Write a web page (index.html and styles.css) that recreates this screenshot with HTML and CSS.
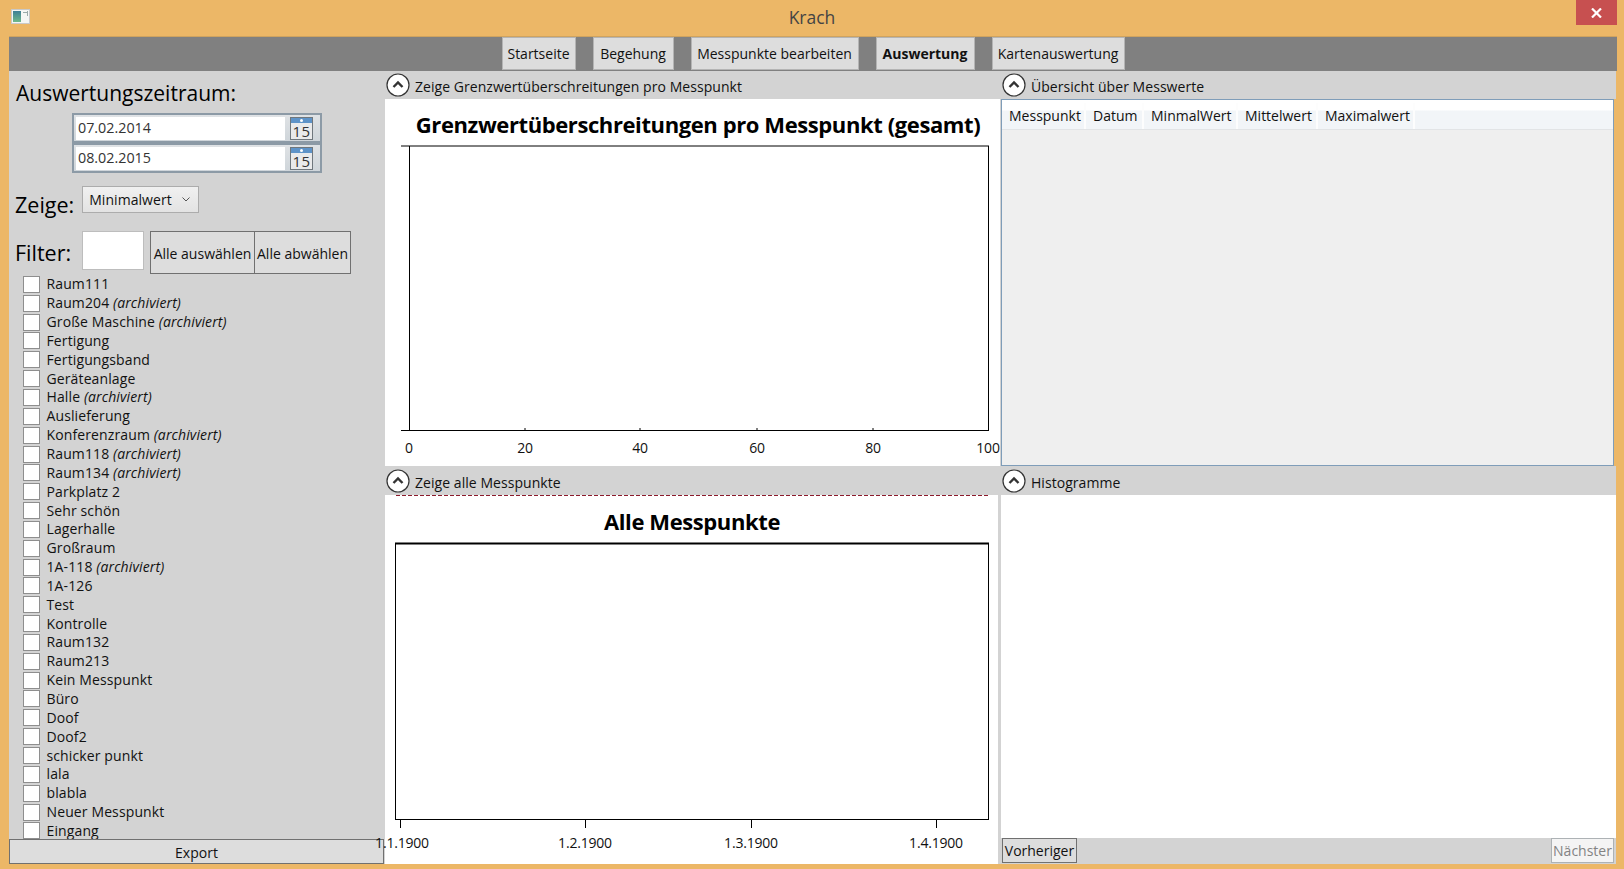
FILE: index.html
```html
<!DOCTYPE html>
<html lang="de">
<head>
<meta charset="utf-8">
<title>Krach</title>
<link rel="stylesheet" href="styles.css">
</head>
<body>
<div class="window">
  <header class="titlebar">
    <svg class="app-icon" width="20" height="16" viewBox="0 0 20 16"><rect x="0.5" y="0.5" width="18" height="14" fill="#f4f6f4" stroke="#c9c9c9"/><defs><linearGradient id="g" x1="0" y1="0" x2="0" y2="1"><stop offset="0" stop-color="#3d7f96"/><stop offset="1" stop-color="#6fb98a"/></linearGradient></defs><rect x="2" y="2" width="8" height="11" fill="url(#g)"/><rect x="12" y="3" width="4" height="1" fill="#9aa"/><rect x="16" y="2" width="1" height="5" fill="#9aa"/></svg>
    <span class="title">Krach</span>
    <button class="close" aria-label="Schließen"><svg width="11" height="10" viewBox="0 0 11 10"><path d="M1 0.5 L10 9.5 M10 0.5 L1 9.5" stroke="#fff" stroke-width="2.2" fill="none"/></svg></button>
  </header>
  <div class="content">
    <nav class="nav">
      <button class="tab tab-1">Startseite</button>
      <button class="tab tab-2">Begehung</button>
      <button class="tab tab-3">Messpunkte bearbeiten</button>
      <button class="tab tab-4">Auswertung</button>
      <button class="tab tab-5">Kartenauswertung</button>
    </nav>
    <div class="main">
      <aside class="sidebar">
        <div class="heading">Auswertungszeitraum:</div>
        <div class="pickers">
          <div class="picker"><span class="date">07.02.2014</span><svg class="cal" width="23" height="23" viewBox="0 0 23 23"><rect x="0.5" y="0.5" width="22" height="22" fill="#e9eaeb" stroke="#6f777d"/><rect x="1" y="1" width="21" height="5" fill="#5e93c8"/><circle cx="11.5" cy="3.5" r="1.5" fill="#fff"/><text class="cal-num" x="11.5" y="19.5">15</text></svg></div>
          <div class="picker"><span class="date">08.02.2015</span><svg class="cal" width="23" height="23" viewBox="0 0 23 23"><rect x="0.5" y="0.5" width="22" height="22" fill="#e9eaeb" stroke="#6f777d"/><rect x="1" y="1" width="21" height="5" fill="#5e93c8"/><circle cx="11.5" cy="3.5" r="1.5" fill="#fff"/><text class="cal-num" x="11.5" y="19.5">15</text></svg></div>
        </div>
        <div class="zeige-row">
          <span class="big-label">Zeige:</span>
          <div class="combo"><span>Minimalwert</span><svg width="8" height="5" viewBox="0 0 8 5"><path d="M0.5 0.5 L4 4 L7.5 0.5" fill="none" stroke="#555" stroke-width="1"/></svg></div>
        </div>
        <div class="filter-row">
          <span class="big-label filter-label">Filter:</span>
          <div class="filter-input"></div>
          <button class="sel-btn sel-a">Alle auswählen</button>
          <button class="sel-btn sel-b">Alle abwählen</button>
        </div>
        <ul class="list">
          <li><i class="box"></i>Raum111</li>
          <li><i class="box"></i>Raum204&nbsp;<em>(archiviert)</em></li>
          <li><i class="box"></i>Große Maschine&nbsp;<em>(archiviert)</em></li>
          <li><i class="box"></i>Fertigung</li>
          <li><i class="box"></i>Fertigungsband</li>
          <li><i class="box"></i>Geräteanlage</li>
          <li><i class="box"></i>Halle&nbsp;<em>(archiviert)</em></li>
          <li><i class="box"></i>Auslieferung</li>
          <li><i class="box"></i>Konferenzraum&nbsp;<em>(archiviert)</em></li>
          <li><i class="box"></i>Raum118&nbsp;<em>(archiviert)</em></li>
          <li><i class="box"></i>Raum134&nbsp;<em>(archiviert)</em></li>
          <li><i class="box"></i>Parkplatz 2</li>
          <li><i class="box"></i>Sehr schön</li>
          <li><i class="box"></i>Lagerhalle</li>
          <li><i class="box"></i>Großraum</li>
          <li><i class="box"></i>1A-118&nbsp;<em>(archiviert)</em></li>
          <li><i class="box"></i>1A-126</li>
          <li><i class="box"></i>Test</li>
          <li><i class="box"></i>Kontrolle</li>
          <li><i class="box"></i>Raum132</li>
          <li><i class="box"></i>Raum213</li>
          <li><i class="box"></i>Kein Messpunkt</li>
          <li><i class="box"></i>Büro</li>
          <li><i class="box"></i>Doof</li>
          <li><i class="box"></i>Doof2</li>
          <li><i class="box"></i>schicker punkt</li>
          <li><i class="box"></i>lala</li>
          <li><i class="box"></i>blabla</li>
          <li><i class="box"></i>Neuer Messpunkt</li>
          <li><i class="box"></i>Eingang</li>
        </ul>
        <button class="export">Export</button>
      </aside>
      <div class="panes">
        <section class="pane pane-a">
          <div class="pane-head"><svg class="toggle" width="24" height="24" viewBox="0 0 24 24"><circle cx="12" cy="12" r="11" fill="#fff" stroke="#333" stroke-width="1.2"/><path d="M7.5 14 L12 9.5 L16.5 14" fill="none" stroke="#333" stroke-width="2.4"/></svg><span>Zeige Grenzwertüberschreitungen pro Messpunkt</span></div>
          <div class="pane-body">
            <svg class="chart" width="615" height="367" viewBox="385 99 615 367">
              <text class="chart-title" x="698" y="133">Grenzwertüberschreitungen pro Messpunkt (gesamt)</text>
              <path class="ln" d="M401 146H989M409.500 146V431M988.500 146V431"/>
              <path class="ln" d="M401 430.500H989"/>
              <path class="ln" d="M525 428V430M640 428V430M757 428V430M873 428V430"/>
              <text class="tick" x="409" y="453">0</text>
              <text class="tick" x="525" y="453">20</text>
              <text class="tick" x="640" y="453">40</text>
              <text class="tick" x="757" y="453">60</text>
              <text class="tick" x="873" y="453">80</text>
              <text class="tick" x="988" y="453">100</text>
            </svg>
          </div>
        </section>
        <section class="pane pane-b">
          <div class="pane-head"><svg class="toggle" width="24" height="24" viewBox="0 0 24 24"><circle cx="12" cy="12" r="11" fill="#fff" stroke="#333" stroke-width="1.2"/><path d="M7.500 14 L12 9.500 L16.500 14" fill="none" stroke="#333" stroke-width="2.400"/></svg><span>Übersicht über Messwerte</span></div>
          <div class="table-panel">
            <div class="thead">
              <span class="th th1">Messpunkt</span>
              <span class="th th2">Datum</span>
              <span class="th th3">MinmalWert</span>
              <span class="th th4">Mittelwert</span>
              <span class="th th5">Maximalwert</span>
            </div>
          </div>
        </section>
        <section class="pane pane-a">
          <div class="pane-head head2"><svg class="toggle" width="24" height="24" viewBox="0 0 24 24"><circle cx="12" cy="12" r="11" fill="#fff" stroke="#333" stroke-width="1.2"/><path d="M7.500 14 L12 9.500 L16.500 14" fill="none" stroke="#333" stroke-width="2.400"/></svg><span>Zeige alle Messpunkte</span></div>
          <div class="pane-body body-low">
            <svg class="chart chart-over" width="615" height="369" viewBox="385 495 615 369">
              <path class="dash" d="M396 495.500H988"/>
              <text class="chart-title" x="692" y="530">Alle Messpunkte</text>
              <path class="thick" d="M395 543.500H989"/>
              <path class="ln" d="M395.500 543V820M988.500 543V820M396 819.500H989"/>
              <path class="ln" d="M400.500 819V828M585.500 819V828M751.500 819V828M936.500 819V828"/>
              <text class="tick" x="402" y="848">1.1.1900</text>
              <text class="tick" x="585" y="848">1.2.1900</text>
              <text class="tick" x="751" y="848">1.3.1900</text>
              <text class="tick" x="936" y="848">1.4.1900</text>
            </svg>
          </div>
        </section>
        <section class="pane pane-b">
          <div class="pane-head head2"><svg class="toggle" width="24" height="24" viewBox="0 0 24 24"><circle cx="12" cy="12" r="11" fill="#fff" stroke="#333" stroke-width="1.2"/><path d="M7.500 14 L12 9.500 L16.500 14" fill="none" stroke="#333" stroke-width="2.400"/></svg><span>Histogramme</span></div>
          <div class="histo">
            <div class="histo-area"></div>
            <div class="histo-bar">
              <button class="pager">Vorheriger</button>
              <button class="pager pager-off">Nächster</button>
            </div>
          </div>
        </section>
      </div>
    </div>
  </div>
</div>
</body>
</html>
```

FILE: styles.css
```css
* { box-sizing: border-box; }
html, body { margin: 0; height: 100%; }
body { font-family: "Open Sans", "Noto Sans", sans-serif; font-size: 14px; color: #111; background: #ecb767; overflow: hidden; }
button { font: inherit; color: inherit; padding: 0; }

.window { width: 1624px; height: 869px; display: flex; flex-direction: column; background: #ecb767; }
.titlebar { height: 36px; flex: none; position: relative; display: flex; justify-content: center; }
.app-icon { position: absolute; left: 11px; top: 9px; }
.title { font-size: 17.5px; line-height: 35px; color: #444; }
.close { position: absolute; left: 1576px; top: 0; width: 41px; height: 25px; background: #c75050; border: 0; display: flex; align-items: center; justify-content: center; }

.content { flex: 1; margin: 0 7px 5px 9px; display: flex; flex-direction: column; min-height: 0; border-top: 1px solid #cfa35f; }
.nav { height: 34px; flex: none; background: #808080; display: flex; justify-content: center; gap: 17px; padding-bottom: 1px; }
.tab { background: #dddddd; border: 1px solid #b4b4b4; height: 33px; white-space: nowrap; }
.tab-1 { width: 74px; }
.tab-2 { width: 81px; }
.tab-3 { width: 168px; }
.tab-4 { width: 99px; font-weight: 700; }
.tab-5 { width: 133px; }

.main { flex: 1; display: flex; min-height: 0; }
.sidebar { width: 376px; flex: none; background: #d3d3d3; display: flex; flex-direction: column; }
.heading { height: 42px; flex: none; font-size: 21px; line-height: 44px; padding-left: 7px; color: #000; }
.pickers { margin-left: 63px; width: 250px; flex: none; }
.picker { height: 30px; display: flex; align-items: center; padding: 0 7px 0 1px; gap: 5px; border: 2px solid #8c9aa6; background: linear-gradient(#dfe2e5, #cfd5da); }
.date { flex: 1; height: 23px; margin-left: 1px; background: #fff; line-height: 22px; padding-left: 2px; font-size: 14.3px; color: #333; }
.cal-num { font-size: 15px; font-weight: 400; fill: #333; text-anchor: middle; letter-spacing: 0.5px; }

.zeige-row { height: 58px; flex: none; display: flex; padding-left: 6px; }
.big-label { font-size: 21.5px; color: #000; line-height: 28px; }
.zeige-row .big-label { margin-top: 18px; }
.combo { margin: 13px 0 0 8px; width: 117px; height: 27px; background: linear-gradient(#f0f0f0, #e3e3e3); border: 1px solid #acacac; display: flex; align-items: center; justify-content: space-between; padding: 0 8px 0 6px; letter-spacing: 0.05px; }
.filter-row { height: 43px; flex: none; display: flex; padding-left: 6px; }
.filter-label { width: 67px; margin-top: 8px; }
.filter-input { width: 62px; height: 39px; background: #fff; border: 1px solid #bdbdbd; }
.sel-btn { height: 43px; background: #dddddd; border: 1px solid #707070; white-space: nowrap; padding-top: 1px; }
.sel-a { width: 105px; margin-left: 6px; }
.sel-b { width: 97px; margin-left: -1px; }

.list { flex: 1; min-height: 0; overflow: hidden; margin: 0; padding: 1px 0 0 14px; list-style: none; }
.list li { height: 18.85px; display: flex; align-items: center; white-space: nowrap; letter-spacing: 0.12px; line-height: 18px; }
.box { width: 17px; height: 17px; flex: none; margin-right: 6.5px; background: #fff; border: 1px solid #8e8e8e; }
.list em { font-style: italic; }
.export { height: 25px; flex: none; background: #dddddd; border: 1px solid #707070; margin-right: 1px; padding-top: 1px; }

.panes { flex: 1; display: grid; grid-template-columns: 615px 616px; grid-template-rows: 395px 398px; min-width: 0; }
.pane { display: flex; flex-direction: column; min-height: 0; }
.pane-b { border-left: 1px solid #d3d3d3; }
.pane-head { height: 28px; flex: none; background: #d3d3d3; display: flex; align-items: center; padding-left: 1px; gap: 5px; }
.pane-head span { padding-top: 2px; letter-spacing: 0.05px; }
.head2 { height: 29px; padding-top: 1px; }
.toggle { flex: none; }
.pane-body { flex: 1; background: #fff; min-height: 0; }
.body-low { border-right: 2px solid #d3d3d3; }
.chart { display: block; overflow: visible; position: relative; z-index: 2; }
.chart-title { font-size: 22px; font-weight: 700; text-anchor: middle; fill: #000; letter-spacing: -0.4px; }
.ln { stroke: #000; stroke-width: 1; fill: none; }
.thick { stroke: #000; stroke-width: 2; fill: none; }
.dash { stroke: #8b1a2b; stroke-width: 1; stroke-dasharray: 4 2; fill: none; }
.tick { font-size: 14px; text-anchor: middle; fill: #111; letter-spacing: -0.2px; }

.table-panel { flex: 1; margin-right: 2px; border: 1px solid #7f9db9; background: #efefef; min-height: 0; }
.thead { display: flex; height: 30px; padding-top: 3px; background: linear-gradient(#ffffff 0, #ffffff 10px, #f2f5f8 11px, #f2f5f8 100%); border-bottom: 1px solid #e2e4e6; }
.th { height: 26px; line-height: 26px; padding-left: 7px; border-right: 2px solid #fdfdfd; white-space: nowrap; }
.th1 { width: 84px; }
.th2 { width: 58px; }
.th3 { width: 94px; }
.th4 { width: 80px; }
.th5 { width: 97px; }

.histo { flex: 1; display: flex; flex-direction: column; min-height: 0; }
.histo-area { flex: 1; background: #fff; }
.histo-bar { height: 26px; flex: none; background: #d3d3d3; display: flex; justify-content: space-between; padding: 0 2px 0 1px; }
.pager { height: 25px; background: #dddddd; border: 1px solid #707070; }
.pager:first-child { width: 75px; }
.pager-off { width: 63px; background: #f4f4f4; border-color: #adb2b5; color: #838383; }
```
